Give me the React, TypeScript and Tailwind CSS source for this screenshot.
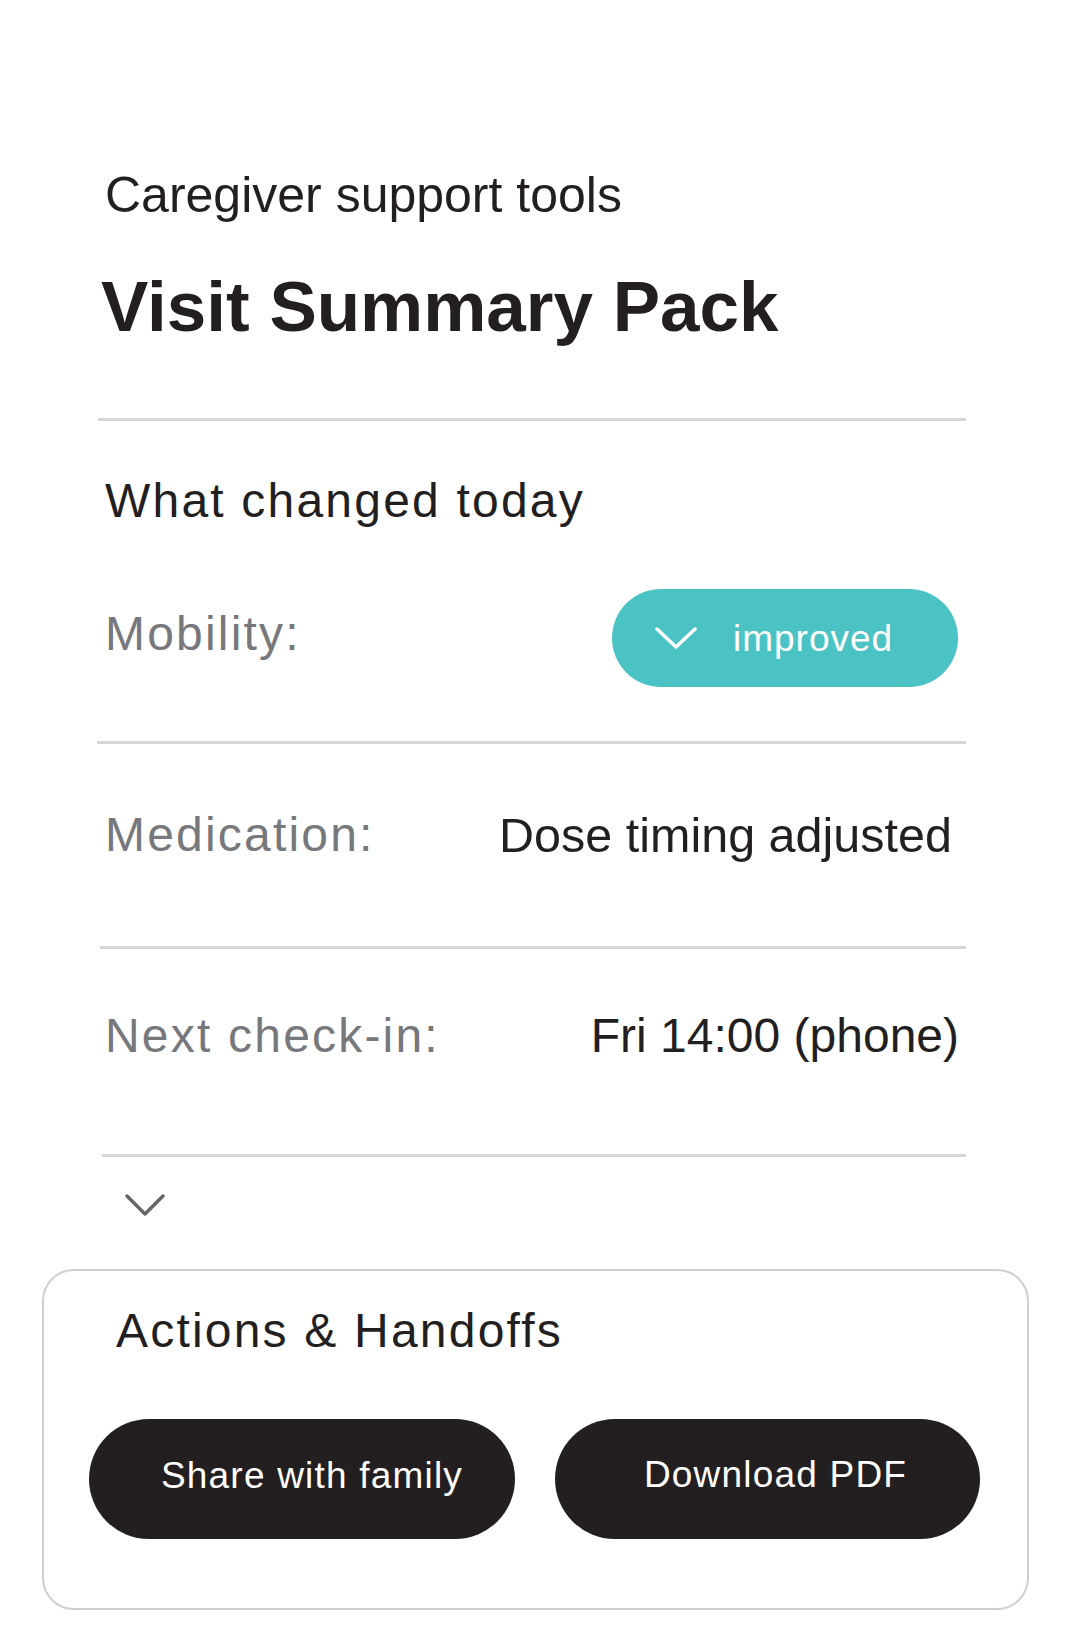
import { ReactNode } from 'react';

const font = { fontFamily: '"Liberation Sans", Arial, Helvetica, sans-serif' };

function Chevron({ className, w, h }: { className: string; w: number; h: number }) {
  return (
    <svg width={w} height={h} viewBox={`0 0 ${w} ${h}`} fill="none" className={className}>
      <polyline
        points={`2,2 ${w / 2},${h - 2} ${w - 2},2`}
        stroke="currentColor"
        strokeWidth="3.5"
        strokeLinecap="round"
        strokeLinejoin="round"
      />
    </svg>
  );
}

function Divider({ className = '' }: { className?: string }) {
  return <div className={`h-[3px] bg-[#d6d6d6] ${className}`} />;
}

function Row({ label, children, className = '', labelClass = '' }: { label: string; children: ReactNode; className?: string; labelClass?: string }) {
  return (
    <div className={`flex items-center justify-between pl-[7px] pr-[8px] ${className}`}>
      <span className={`text-[48px] leading-none tracking-[2.2px] text-[#77787c] ${labelClass}`}>{label}</span>
      {children}
    </div>
  );
}

export default function App() {
  return (
    <div className="min-h-[1648px] bg-white text-[#231f20]" style={font}>
      <div className="ml-[98px] w-[868px] pt-[170px]">
        <p className="pl-[7px] text-[50px] leading-none">Caregiver support tools</p>
        <h1 className="mt-[51px] pl-[3px] text-[71px] font-bold leading-none">Visit Summary Pack</h1>

        <Divider className="mt-[76px]" />

        <h2 className="mt-[56px] pl-[7px] text-[48px] leading-none tracking-[2.2px]">What changed today</h2>

        <Row label="Mobility:" className="mt-[64px]" labelClass="mb-[8px]">
          <div className="flex h-[98px] w-[346px] items-center gap-[36px] rounded-full bg-[#4bc3c4] pl-[43px] text-white">
            <Chevron w={42} h={22} className="text-white" />
            <span className="text-[37px] leading-none tracking-[1px]">improved</span>
          </div>
        </Row>

        <Divider className="mt-[54px] -ml-[1px]" />

        <Row label="Medication:" className="mt-[67px] items-baseline">
          <span className="mr-[6px] text-[48.5px] leading-none">Dose timing adjusted</span>
        </Row>

        <Divider className="mt-[86px] ml-[2px]" />

        <Row label="Next check-in:" className="mt-[63px]">
          <span className="-mr-[1px] text-[48px] leading-none">Fri 14:00 (phone)</span>
        </Row>

        <Divider className="mt-[94px] ml-[4px]" />

        <div className="mt-[37px] pl-[27px]">
          <Chevron w={40} h={22} className="text-[#666666]" />
        </div>
      </div>

      <div className="mt-[53px] ml-[42px] w-[987px] rounded-[32px] border-2 border-[#cfcfcf] pt-[36px] pb-[69px]">
        <h2 className="pl-[72px] text-[48px] leading-none tracking-[2.2px]">Actions &amp; Handoffs</h2>
        <div className="mt-[64px] flex gap-[40px] pl-[45px]">
          <button className="flex h-[120px] w-[426px] items-center justify-center rounded-[60px] bg-[#231f20] pl-[20px] pb-[6px] text-[37px] leading-none tracking-[1.2px] text-white">
            Share with family
          </button>
          <button className="flex h-[120px] w-[425px] items-center justify-center rounded-[60px] bg-[#231f20] pl-[16px] pb-[8px] text-[37px] leading-none tracking-[1.2px] text-white">
            Download PDF
          </button>
        </div>
      </div>
    </div>
  );
}
